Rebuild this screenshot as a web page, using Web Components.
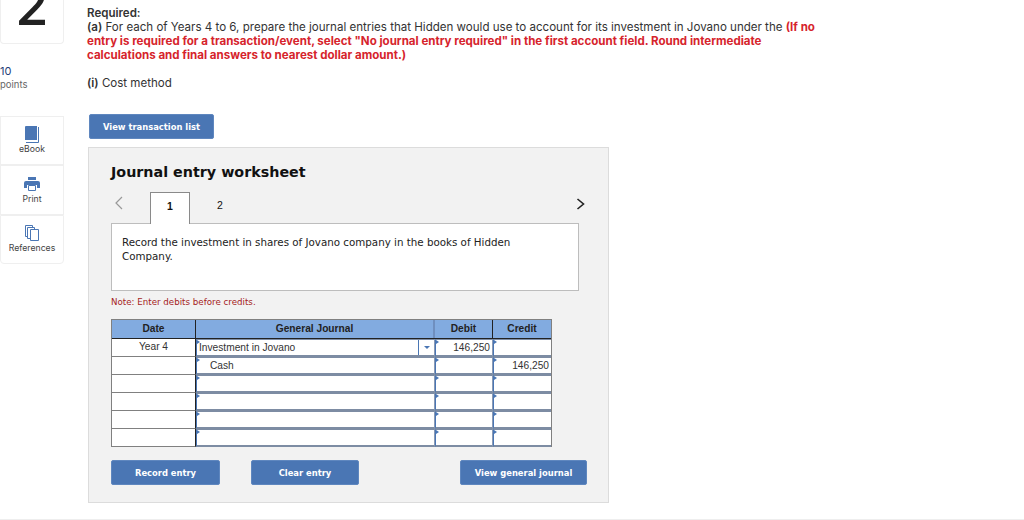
<!DOCTYPE html>
<html>
<head>
<meta charset="utf-8">
<title>Journal entry worksheet</title>
<style>
  html, body { margin: 0; padding: 0; background: #fff; }
  body { width: 1024px; height: 520px; overflow: hidden; }
</style>
</head>
<body>
<question-page></question-page>

<script>
class BlueButton extends HTMLElement {
  constructor() {
    super();
    this.attachShadow({ mode: 'open' });
    this.shadowRoot.innerHTML = `
      <style>
        :host {
          display: flex;
          align-items: center;
          justify-content: center;
          box-sizing: border-box;
          height: 25px;
          padding-top: 1px;
          background: #4a76b4;
          border: 1px solid #5f87bf;
          border-radius: 2px;
          color: #fff;
          font: bold 8.4px/1 "DejaVu Sans", sans-serif;
        }
      </style>
      <slot></slot>
    `;
  }
}
customElements.define('blue-button', BlueButton);

class ToolItem extends HTMLElement {
  constructor() {
    super();
    this.attachShadow({ mode: 'open' });
    this.shadowRoot.innerHTML = `
      <style>
        :host {
          display: flex;
          flex-direction: column;
          align-items: center;
          box-sizing: border-box;
          height: 49px;
          padding-top: 9px;
          color: #444;
          font: 8.7px/12px Inter, sans-serif;
          border: 1px solid #efefef;
        }
        .icon { height: 17px; width: 18px; display: block; }
        ::slotted(svg) { display: block; }
      </style>
      <div class="icon"><slot name="icon"></slot></div>
      <slot></slot>
    `;
  }
}
customElements.define('tool-item', ToolItem);

class QuestionSide extends HTMLElement {
  constructor() {
    super();
    this.attachShadow({ mode: 'open' });
    this.shadowRoot.innerHTML = `
      <style>
        :host {
          display: block;
          width: 64px;
          flex: none;
          font-family: Inter, sans-serif;
        }
        .num {
          box-sizing: border-box;
          height: 44px;
          overflow: hidden;
          display: flex;
          justify-content: center;
          align-items: flex-end;
          padding-bottom: 20px;
          border: 1px solid #efefef;
          border-top: 0;
          border-radius: 0 0 4px 4px;
          color: #222;
          font: 500 54px/34px Inter, sans-serif;
        }
        .pts { margin-top: 20px; height: 52px; font-size: 9.5px; line-height: 14px; color: #666; }
        .pts b { display: block; font-weight: 400; font-size: 11px; color: #1f3f78; }
        .tools tool-item:nth-child(2) { height: 50px; padding-top: 10px; }
        .tools tool-item:last-child { border-radius: 0 0 4px 4px; }
      </style>
      <div class="num">2</div>
      <div class="pts"><b>10</b>points</div>
      <div class="tools">
        <tool-item>
          <svg slot="icon" width="18" height="18" viewBox="0 0 18 18">
            <path d="M2 1q0-1 1-1h11v14H2z" fill="#4a76b4"/>
            <path d="M15.5 1v15.5H3" fill="none" stroke="#4a76b4"/>
          </svg>
          eBook
        </tool-item>
        <tool-item>
          <svg slot="icon" width="18" height="18" viewBox="0 0 18 18" style="margin-top:-1px">
            <path d="M5 2h8v3H5z" fill="#4a76b4"/>
            <path d="M1 8q0-2 2-2h12q2 0 2 2v5h-3v-3H4v3H1z" fill="#4a76b4"/>
            <path d="M5.5 10.5h7v5h-7z" fill="#fff" stroke="#4a76b4"/>
          </svg>
          Print
        </tool-item>
        <tool-item>
          <svg slot="icon" width="18" height="18" viewBox="0 0 18 18" fill="#fff" stroke="#4a76b4">
            <path d="M2.5 .5h7v11h-7z"/>
            <path d="M4.5 2.5h7v11h-7z"/>
            <path d="M7.5 4.5h8v11h-8z"/>
          </svg>
          References
        </tool-item>
      </div>
    `;
  }
}
customElements.define('question-side', QuestionSide);

class RequiredText extends HTMLElement {
  constructor() {
    super();
    this.attachShadow({ mode: 'open' });
    this.shadowRoot.innerHTML = `
      <style>
        :host {
          display: block;
          margin-top: 6px;
          color: #333;
          font: 11.55px/14px Inter, sans-serif;
          white-space: nowrap;
        }
        b { font-weight: 600; }
        .red { color: #d6242c; font-weight: 700; }
        p { margin: 0; }
        .method { margin-top: 14px; }
      </style>
      <p><b>Required:</b></p>
      <p><b>(a)</b> For each of Years 4 to 6, prepare the journal entries that Hidden would use to account for its investment in Jovano under the <span class="red">(If no</span></p>
      <p class="red">entry is required for a transaction/event, select "No journal entry required" in the first account field. Round intermediate</p>
      <p class="red">calculations and final answers to nearest dollar amount.)</p>
      <p class="method"><b>(i)</b> Cost method</p>
    `;
  }
}
customElements.define('required-text', RequiredText);

class JournalRow extends HTMLElement {
  static get observedAttributes() {
    return ['date', 'account', 'debit', 'credit', 'indent', 'select'];
  }

  constructor() {
    super();
    this.attachShadow({ mode: 'open' });
  }

  connectedCallback() {
    this.render();
  }

  attributeChangedCallback() {
    this.render();
  }

  render() {
    const get = (n) => this.getAttribute(n) || '';
    this.shadowRoot.innerHTML = `
      <style>
        :host {
          display: grid;
          grid-template-columns: 84px 239px 58px 58px;
          height: 18px;
          box-sizing: border-box;
          font: 10.2px/1 "Liberation Sans", sans-serif;
          color: #333;
        }
        .date {
          display: flex; align-items: center; justify-content: center;
          background: #fff;
          border-right: 1px solid #222;
          border-bottom: 1px solid #808080;
          box-sizing: border-box;
        }
        .cell {
          position: relative;
          display: flex; align-items: center;
          box-sizing: border-box;
          background: #fff;
          border-left: 1px solid #4a76b4;
          border-right: 1px solid #8a9ab5;
          border-top: 1px solid #7d8ca3;
          border-bottom: 2px solid #7d8ca3;
          padding: 1px 2px 0;
        }
        .cell:last-child { border-right: 0; }
        .cell.num { justify-content: flex-end; }
        .cell::before {
          content: "";
          position: absolute;
          left: 0; top: 0;
          border-left: 3px solid #4a76b4;
          border-top: 2.5px solid transparent;
          border-bottom: 2.5px solid transparent;
        }
        .acct.indent { padding-left: 13px; }
        .pick {
          position: absolute; right: 0; top: 0; bottom: 0; width: 15px;
          border-left: 1px solid #4a76b4;
          display: flex; align-items: center; justify-content: center;
        }
        .pick i {
          border-top: 3px solid #4a76b4;
          border-left: 3px solid transparent;
          border-right: 3px solid transparent;
        }
      </style>
      <div class="date">${get('date')}</div>
      <div class="cell acct ${this.hasAttribute('indent') ? 'indent' : ''}">${get('account')}${this.hasAttribute('select') ? '<span class="pick"><i></i></span>' : ''}</div>
      <div class="cell num">${get('debit')}</div>
      <div class="cell num">${get('credit')}</div>
    `;
  }
}
customElements.define('journal-row', JournalRow);

class JournalTable extends HTMLElement {
  constructor() {
    super();
    this.attachShadow({ mode: 'open' });
    this.shadowRoot.innerHTML = `
      <style>
        :host {
          display: block;
          box-sizing: border-box;
          width: 441px;
          border: 1px solid #808080;
          border-bottom: 0;
        }
        .head {
          display: grid;
          grid-template-columns: 84px 239px 58px 58px;
          box-sizing: border-box;
          height: 19px;
          background: #82abe0;
          border-bottom: 1px solid #222;
          font: bold 10.2px/1 "Liberation Sans", sans-serif;
          color: #222;
        }
        .head div {
          display: flex; align-items: center; justify-content: center;
          box-sizing: border-box;
          border-right: 1px solid #222;
        }
        .head div:nth-child(2) { border-right: 2px solid #6f8fbf; }
        .head div:last-child { border-right: 0; }
      </style>
      <div class="head"><div>Date</div><div>General Journal</div><div>Debit</div><div>Credit</div></div>
      <slot></slot>
    `;
  }
}
customElements.define('journal-table', JournalTable);

class WorksheetPanel extends HTMLElement {
  constructor() {
    super();
    this.attachShadow({ mode: 'open' });
    this.shadowRoot.innerHTML = `
      <style>
        :host {
          display: block;
          box-sizing: border-box;
          width: 521px;
          height: 356px;
          background: #f2f2f2;
          border: 1px solid #dcdcdc;
          padding: 15px 21px 0 22px;
          font-family: "DejaVu Sans", sans-serif;
        }
        h2 { margin: 0; font: bold 14.3px/19px "DejaVu Sans", sans-serif; color: #111; }
        .tabs {
          display: flex;
          align-items: flex-end;
          width: 468px;
          height: 32px;
          margin-top: 10px;
          margin-bottom: -1px;
          position: relative;
          z-index: 1;
          font: 10.5px/1 "Liberation Sans", sans-serif;
          color: #111;
        }
        .prev { width: 39px; display: flex; padding: 0 0 10px 3px; box-sizing: border-box; align-self: center; }
        .next { margin-left: auto; display: flex; align-self: center; padding-bottom: 8px; margin-right: -6px; }
        .tab {
          box-sizing: border-box;
          width: 40px;
          height: 32px;
          padding-bottom: 5px;
          display: flex; align-items: center; justify-content: center;
        }
        .tab.on { background: #fff; border: 1px solid #8a8a8a; border-bottom: 0; font-weight: bold; }
        .tab.off { width: 60px; }
        .desc {
          box-sizing: border-box;
          width: 468px;
          height: 68px;
          background: #fff;
          border: 1px solid #bdbdbd;
          padding: 11px 60px 12px 10px;
          font-size: 10.3px;
          line-height: 14px;
          color: #222;
        }
        .note { margin: 5px 0 11px; font-size: 8.7px; line-height: 12px; color: #a51c1c; }
        .actions { display: flex; margin-top: 13px; }
        .actions blue-button:nth-child(1) { width: 109px; }
        .actions blue-button:nth-child(2) { width: 108px; margin-left: 31px; }
        .actions blue-button:nth-child(3) { width: 127px; margin-left: auto; }
      </style>
      <h2>Journal entry worksheet</h2>
      <div class="tabs">
        <span class="prev"><svg width="9" height="14" viewBox="0 0 9 14"><path d="M8 1 2 7l6 6" fill="none" stroke="#999" stroke-width="1.2"/></svg></span>
        <div class="tab on">1</div>
        <div class="tab off">2</div>
        <span class="next"><svg width="9" height="14" viewBox="0 0 9 14"><path d="M1.5 2l6 5-6 5" fill="none" stroke="#222" stroke-width="1.6"/></svg></span>
      </div>
      <div class="desc">Record the investment in shares of Jovano company in the books of Hidden Company.</div>
      <div class="note">Note: Enter debits before credits.</div>
      <slot></slot>
      <div class="actions">
        <blue-button>Record entry</blue-button>
        <blue-button>Clear entry</blue-button>
        <blue-button>View general journal</blue-button>
      </div>
    `;
  }
}
customElements.define('worksheet-panel', WorksheetPanel);

class QuestionPage extends HTMLElement {
  constructor() {
    super();
    this.attachShadow({ mode: 'open' });
    this.shadowRoot.innerHTML = `
      <style>
        :host {
          display: flex;
          box-sizing: border-box;
          width: 1024px;
          height: 520px;
          border-bottom: 1px solid #eee;
          overflow: hidden;
        }
        main { margin-left: 23px; flex: 1; }
        blue-button.list { width: 125px; margin: 24px 0 8px 2px; }
        worksheet-panel { margin-left: 1px; }
      </style>
      <question-side></question-side>
      <main>
        <required-text></required-text>
        <blue-button class="list">View transaction list</blue-button>
        <worksheet-panel>
          <journal-table>
            <journal-row date="Year 4" account="Investment in Jovano" debit="146,250" select></journal-row>
            <journal-row account="Cash" credit="146,250" indent></journal-row>
            <journal-row></journal-row>
            <journal-row></journal-row>
            <journal-row></journal-row>
            <journal-row></journal-row>
          </journal-table>
        </worksheet-panel>
      </main>
    `;
  }
}
customElements.define('question-page', QuestionPage);
</script>
</body>
</html>
